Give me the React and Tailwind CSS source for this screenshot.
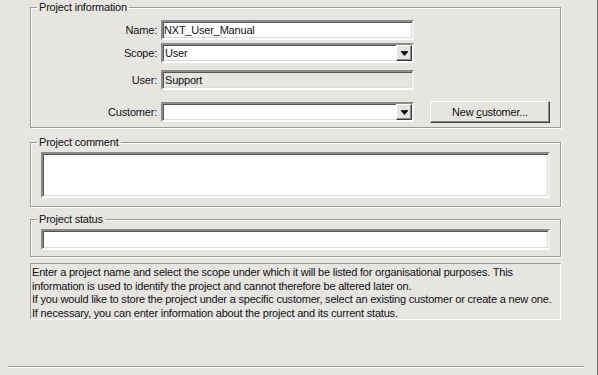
import { useState } from 'react';

const font = { fontFamily: '"Liberation Sans", Arial, sans-serif' };

// sunken classic edit box
const sunken =
  'border-2 border-t-[#8c8b89] border-l-[#8c8b89] border-b-white border-r-[#f4f3f1] shadow-[inset_1px_1px_0_#555,inset_-1px_-1px_0_#dcdad6]';

function Group({ title, className = '', children }) {
  return (
    <fieldset
      className={`border border-[#9c9a97] shadow-[inset_1px_1px_0_#fff,1px_1px_0_#fff] ${className}`}
    >
      <legend className="ml-[6px] px-[2px] leading-[13px] bg-[#e7e5e2]">{title}</legend>
      {children}
    </fieldset>
  );
}

function DropArrow() {
  return (
    <div className="w-[16px] h-[16px] flex items-center justify-center bg-[#e7e5e2] border border-t-white border-l-white border-b-[#404040] border-r-[#404040] shadow-[inset_-1px_-1px_0_#8a8a8a]">
      <svg width="7" height="5" viewBox="0 0 7 5">
        <rect x="0" y="0" width="7" height="1" fill="#222" />
        <polygon points="0,1 7,1 3.5,5" fill="#111" />
      </svg>
    </div>
  );
}

function Row({ label, children, className = '' }) {
  return (
    <div className={`flex items-center ${className}`}>
      <div className="w-[127px] text-right pr-[1px]">{label}</div>
      <div className="ml-[3px] flex items-center">{children}</div>
    </div>
  );
}

export default function App() {
  const [name, setName] = useState('NXT_User_Manual');

  return (
    <div
      className="w-[598px] h-[375px] bg-[#e7e5e2] text-[11px] tracking-[-0.2px] text-[#111] overflow-hidden border-r border-r-[#6e6d6b] flex flex-col"
      style={font}
    >
      <div className="ml-[30px] w-[531px] flex flex-col">
        {/* Project information */}
        <Group title="Project information" className="mt-[1px] pb-[4px]">
          <Row label="Name:" className="mt-[6px]">
            <div className={`w-[253px] h-[20px] bg-white flex items-center px-[1px] ${sunken}`}>
              <input
                value={name}
                onChange={(e) => setName(e.target.value)}
                className="w-full bg-transparent outline-none leading-[14px]"
              />
            </div>
          </Row>
          <Row label="Scope:" className="mt-[3px]">
            <div className={`w-[253px] h-[20px] bg-white flex items-center justify-between pl-[2px] ${sunken}`}>
              <span>User</span>
              <DropArrow />
            </div>
          </Row>
          <Row label="User:" className="mt-[7px]">
            <div className={`w-[253px] h-[20px] bg-[#e7e5e2] flex items-center pl-[2px] ${sunken}`}>
              <span>Support</span>
            </div>
          </Row>
          <Row label="Customer:" className="mt-[11px]">
            <div className={`w-[253px] h-[20px] bg-white flex items-center justify-end ${sunken}`}>
              <DropArrow />
            </div>
            <button className="ml-[16px] w-[120px] h-[22px] bg-[#e7e5e2] border border-t-white border-l-white border-b-[#404040] border-r-[#404040] shadow-[inset_-1px_-1px_0_#8a8a8a]">
              New <span className="underline">c</span>ustomer...
            </button>
          </Row>
        </Group>

        {/* Project comment */}
        <Group title="Project comment" className="mt-[8px] pb-[8px]">
          <div className={`mx-[10px] mt-[3px] h-[46px] bg-white ${sunken}`} />
        </Group>

        {/* Project status */}
        <Group title="Project status" className="mt-[6px] pb-[6px]">
          <div className={`mx-[10px] mt-[3px] h-[21px] bg-white ${sunken}`} />
        </Group>

        {/* Hint text */}
        <div className="mt-[6px] h-[57px] border border-t-[#9c9a97] border-l-[#9c9a97] border-b-white border-r-white pl-[1px] pt-[2px] leading-[13.5px] whitespace-nowrap">
          <p>Enter a project name and select the scope under which it will be listed for organisational purposes. This</p>
          <p>information is used to identify the project and cannot therefore be altered later on.</p>
          <p>If you would like to store the project under a specific customer, select an existing customer or create a new one.</p>
          <p>If necessary, you can enter information about the project and its current status.</p>
        </div>
      </div>

      {/* bottom separator */}
      <div className="mt-auto mb-[7px] ml-[8px] w-[576px] h-[2px] border-t border-t-[#9c9a97] border-b border-b-white" />
    </div>
  );
}
